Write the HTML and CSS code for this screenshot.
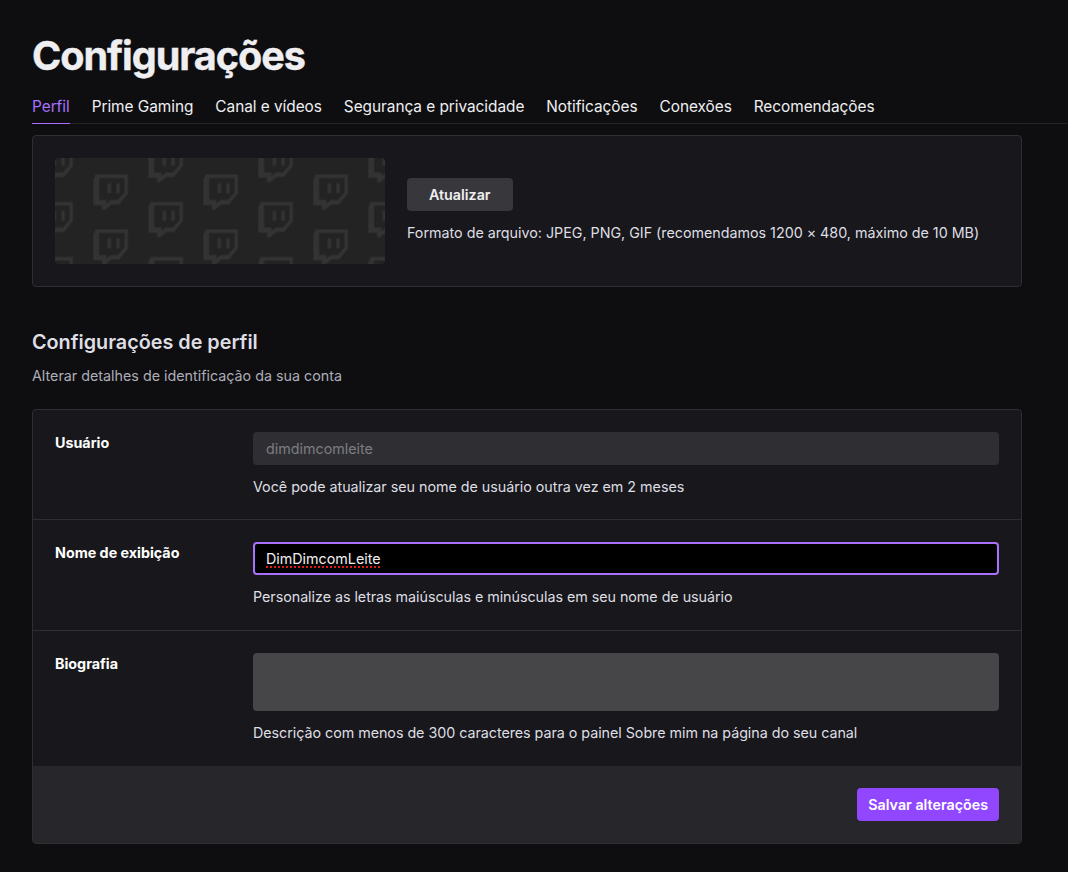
FILE: index.html
```
<!DOCTYPE html>
<html lang="pt-BR">
<head>
	<meta charset="utf-8">
	<title>Configurações</title>
	<link rel="stylesheet" href="styles.css">
</head>
<body>
	<header>
		<h1>Configurações</h1>
		<nav class="tabs">
			<a class="active">Perfil</a>
			<a>Prime Gaming</a>
			<a>Canal e vídeos</a>
			<a>Segurança e privacidade</a>
			<a>Notificações</a>
			<a>Conexões</a>
			<a>Recomendações</a>
		</nav>
	</header>
	<main>
		<section class="card banner">
			<svg class="preview" width="330" height="106" viewBox="0 0 330 106">
				<defs>
					<g id="glitch">
						<path fill-rule="evenodd" d="M2.3 0H34.5V19L25.5 30H18L11.5 35.3H8.7V30.7H0V5.5ZM5.7 3.5V25.5H13V29L17.5 25.5H24.5L31.2 18V3.5Z"/>
						<path d="M14.3 8.7h3.3v10h-3.3zM23 8.7h3.3v10H23z"/>
					</g>
					<pattern id="tile" x="38.4" y="16.5" width="110" height="55" patternUnits="userSpaceOnUse">
						<use href="#glitch"/>
						<use href="#glitch" x="55" y="27.5"/>
						<use href="#glitch" x="55" y="-27.5"/>
					</pattern>
				</defs>
				<rect class="bg" width="330" height="106"/>
				<rect fill="url(#tile)" width="330" height="106"/>
			</svg>
			<div class="upload">
				<button class="btn">Atualizar</button>
				<p>Formato de arquivo: JPEG, PNG, GIF (recomendamos 1200 × 480, máximo de 10 MB)</p>
			</div>
		</section>

		<h2>Configurações de perfil</h2>
		<p class="sub">Alterar detalhes de identificação da sua conta</p>

		<section class="card">
			<div class="row user">
				<label>Usuário</label>
				<div class="field">
					<div class="input disabled">dimdimcomleite</div>
					<p>Você pode atualizar seu nome de usuário outra vez em 2 meses</p>
				</div>
			</div>
			<div class="row name">
				<label>Nome de exibição</label>
				<div class="field">
					<div class="input focus"><span class="typo">DimDimcomLeite</span></div>
					<p>Personalize as letras maiúsculas e minúsculas em seu nome de usuário</p>
				</div>
			</div>
			<div class="row bio">
				<label>Biografia</label>
				<div class="field">
					<textarea></textarea>
					<p>Descrição com menos de 300 caracteres para o painel Sobre mim na página do seu canal</p>
				</div>
			</div>
			<div class="foot">
				<button class="btn save">Salvar alterações</button>
			</div>
		</section>
	</main>
</body>
</html>
```
FILE: styles.css
```
* {
	box-sizing: border-box;
}

body {
	margin: 0;
	height: 872px;
	overflow: hidden;
	background: #0e0e10;
	color: #dedee3;
	font: 14.3px/21.45px Inter, sans-serif;
}

h1, h2, p {
	margin: 0;
}

header {
	padding: 33px 0 0 32px;
}

h1 {
	height: 58px;
	font-size: 39.6px;
	line-height: 46px;
	font-weight: 700;
	letter-spacing: -1.05px;
	color: #efeff1;
	-webkit-text-stroke: 0.4px #efeff1;
}

.tabs {
	display: flex;
	gap: 22px;
	height: 33px;
	border-bottom: 1px solid #252528;
	font-size: 15.4px;
	line-height: 31px;
	letter-spacing: -0.045px;
	color: #efeff1;
}

.tabs a {
	height: 33px;
	white-space: nowrap;
}

.tabs .active {
	color: #a970ff;
	border-bottom: 1px solid #a970ff;
}

main {
	width: 990px;
	margin: 11px 0 0 32px;
}

.card {
	background: #18181c;
	border: 1px solid #2f2f33;
	border-radius: 4px;
	overflow: hidden;
}

.banner {
	display: flex;
	align-items: center;
	gap: 22px;
	height: 152px;
	padding: 22px;
}

.preview {
	border-radius: 4px;
	fill: #333;
}

.preview .bg {
	fill: #232323;
}

.upload p {
	margin-top: 11px;
	letter-spacing: -0.012px;
}

.btn {
	display: block;
	height: 33px;
	padding: 0 22px;
	border: 0;
	border-radius: 4px;
	background: #38383c;
	color: #efeff1;
	font: 600 14.3px Inter, sans-serif;
}

h2 {
	margin-top: 43px;
	font-size: 19.8px;
	line-height: 24px;
	font-weight: 600;
}

.sub {
	margin: 11px 0 22.55px;
	color: #adadb8;
}

.row {
	display: flex;
	padding: 22px;
}

.row + .row {
	border-top: 1px solid #2f2f33;
}

.row.user {
	height: 109px;
}

.row.name {
	height: 111px;
}

.row.bio {
	height: 136px;
}

.row label {
	width: 198px;
	font-weight: 700;
	color: #fff;
}

.field {
	flex: 1;
}

.field p {
	margin-top: 11px;
	letter-spacing: -0.035px;
}

.user .field p {
	letter-spacing: -0.02px;
}

.input {
	height: 33px;
	padding: 0 11px;
	border: 2px solid #2f2f33;
	border-radius: 4px;
	line-height: 29px;
}

.input.disabled {
	background: #2f2f33;
	color: #7c7c82;
}

.input.focus {
	background: #000;
	border-color: #a970ff;
	color: #efeff1;
}

.typo {
	text-decoration: underline dotted #e01b1b 1.5px;
	text-decoration-skip-ink: none;
	text-underline-offset: 2px;
}

textarea {
	display: block;
	width: 100%;
	height: 58px;
	border: 0;
	border-radius: 4px;
	background: #464649;
	resize: none;
}

.foot {
	display: flex;
	justify-content: flex-end;
	padding: 22px;
	background: #26262b;
}

.btn.save {
	padding: 0 11px 1px;
	background: #9147ff;
	color: #fff;
}
```
